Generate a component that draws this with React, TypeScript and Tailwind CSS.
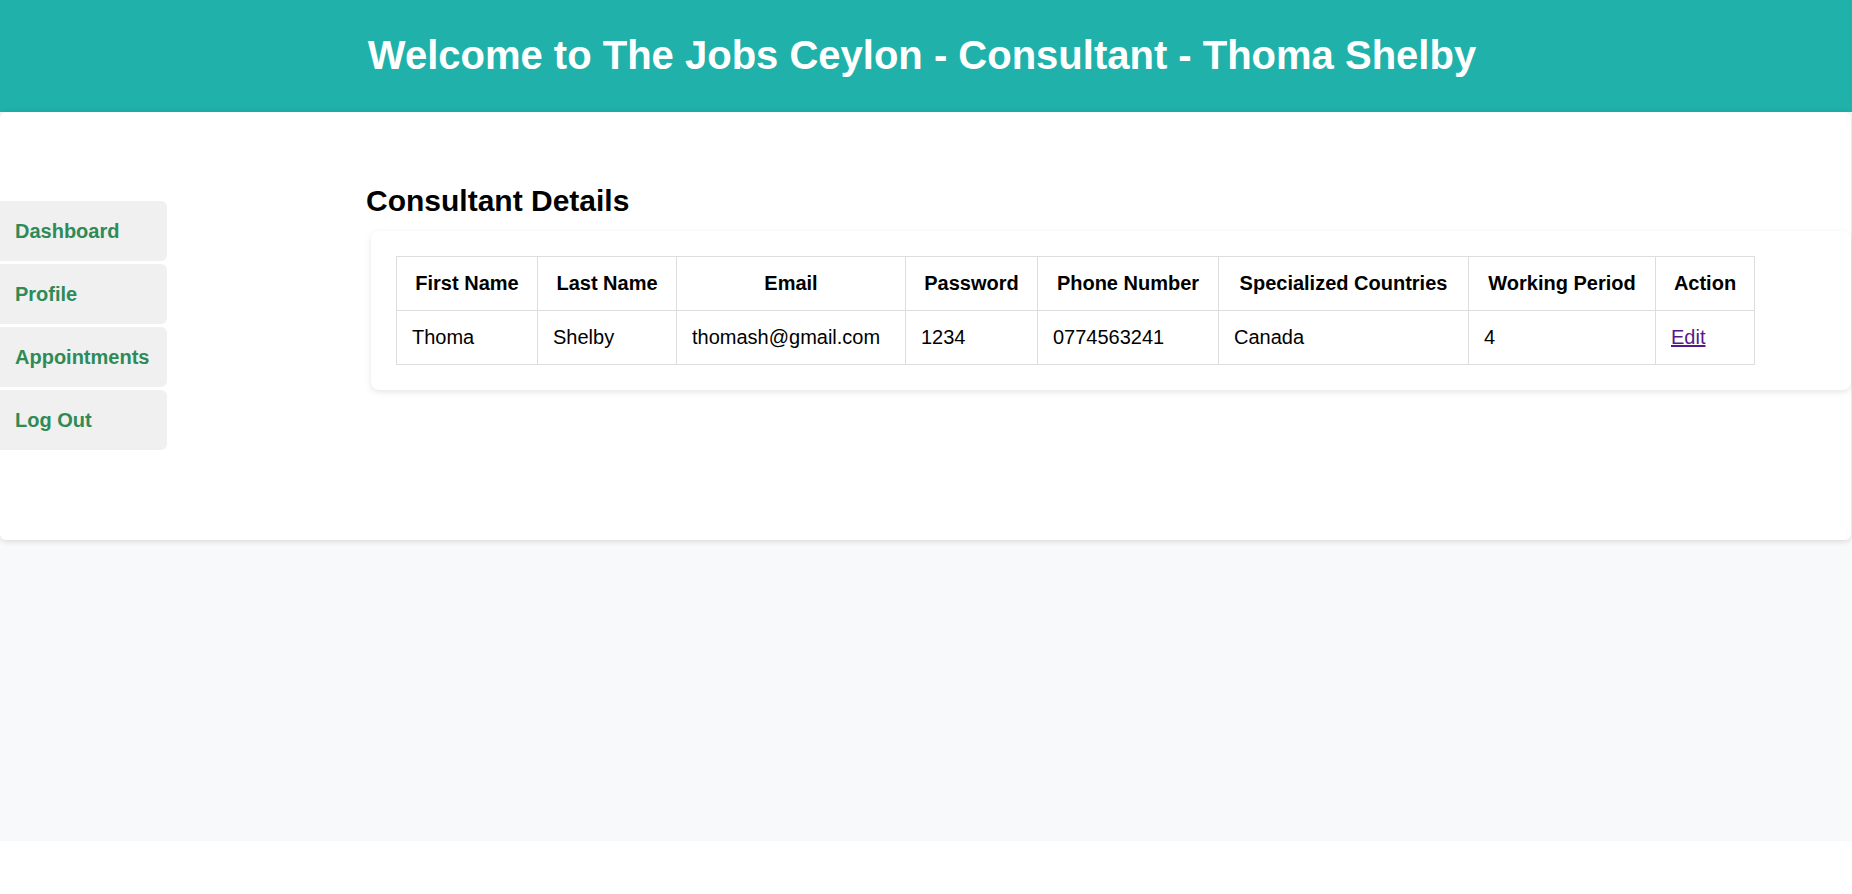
import React from "react";

const cols = [
  { h: "First Name", v: "Thoma", w: "w-[141px]" },
  { h: "Last Name", v: "Shelby", w: "w-[139px]" },
  { h: "Email", v: "thomash@gmail.com", w: "w-[229px]" },
  { h: "Password", v: "1234", w: "w-[132px]" },
  { h: "Phone Number", v: "0774563241", w: "w-[181px]" },
  { h: "Specialized Countries", v: "Canada", w: "w-[250px]" },
  { h: "Working Period", v: "4", w: "w-[187px]" },
  { h: "Action", v: "", w: "w-[99px]" },
];

const nav = ["Dashboard", "Profile", "Appointments", "Log Out"];

export default function App() {
  return (
    <div className="w-full font-['Liberation_Sans',Arial,sans-serif] text-black">
      <div className="h-[841px] bg-[#f8f9fa]">
        <header className="h-[112px] bg-[#20b2aa] flex items-center justify-center pr-[8px] pb-[3px]">
          <h1 className="text-[40px] font-bold text-white leading-[46px]">
            Welcome to The Jobs Ceylon - Consultant - Thoma Shelby
          </h1>
        </header>
        <div className="h-[428px] w-[1851px] bg-white rounded-[6px] shadow-[0_1px_6px_rgba(0,0,0,0.15)] flex">
          <nav className="w-[167px] pt-[89px] flex flex-col gap-[3px]">
            {nav.map((n) => (
              <a
                key={n}
                href="#"
                className="h-[60px] bg-[#f0f0f0] rounded-r-[6px] flex items-center pl-[15px] text-[20px] font-bold text-[#2e8b57]"
              >
                {n}
              </a>
            ))}
          </nav>
          <main className="flex-1 pl-[199px] pt-[71px]">
            <h2 className="text-[30px] font-bold leading-[35px]">Consultant Details</h2>
            <div className="mt-[13px] ml-[5px] bg-white rounded-[8px] shadow-[0_2px_6px_rgba(0,0,0,0.1)] p-[25px] pr-0">
              <table className="border-collapse text-[20px] table-fixed">
                <thead>
                  <tr>
                    {cols.map((c) => (
                      <th
                        key={c.h}
                        className={`${c.w} border border-[#dddddd] px-[15px] py-[15px] font-bold text-center leading-[23px] whitespace-nowrap`}
                      >
                        {c.h}
                      </th>
                    ))}
                  </tr>
                </thead>
                <tbody>
                  <tr>
                    {cols.map((c) => (
                      <td
                        key={c.h}
                        className="border border-[#dddddd] px-[15px] py-[15px] text-left leading-[23px] whitespace-nowrap"
                      >
                        {c.h === "Action" ? (
                          <a href="#" className="text-[#551a8b] underline">
                            Edit
                          </a>
                        ) : (
                          c.v
                        )}
                      </td>
                    ))}
                  </tr>
                </tbody>
              </table>
            </div>
          </main>
        </div>
      </div>
    </div>
  );
}
